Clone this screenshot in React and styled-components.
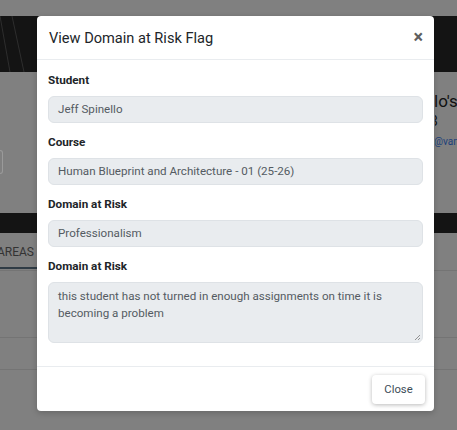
import React from 'react'
import styled, { createGlobalStyle } from 'styled-components'

const GlobalStyle = createGlobalStyle`
  html, body {
    margin: 0;
    padding: 0;
    width: 457px;
    height: 430px;
    overflow: hidden;
    font-family: Roboto, "Liberation Sans", Arial, sans-serif;
  }
`

const Page = styled.div`
  position: relative;
  width: 457px;
  height: 430px;
  overflow: hidden;
  background: #808080;
  display: flex;
  flex-direction: column;
`

const TopGap = styled.div`
  height: 16px;
`

const Hero = styled.div`
  height: 56px;
  background: #141414;
  svg { display: block; }
`

const Profile = styled.div`
  height: 141px;
  display: flex;
  justify-content: space-between;
`

const SideBox = styled.div`
  margin-top: 78px;
  width: 2px;
  height: 22px;
  border: 1px solid #9a9a9a;
  border-left: none;
  border-radius: 0 4px 4px 0;
`

const ProfileText = styled.div`
  width: 22px;
  padding-top: 18px;
  display: flex;
  flex-direction: column;
  overflow: hidden;
  white-space: nowrap;
`

const Name = styled.span`
  font-size: 17px;
  line-height: 22px;
  color: #101010;
  margin-left: -1px;
`

const Year = styled.span`
  font-size: 14px;
  line-height: 18px;
  color: #101010;
  margin-left: -5px;
`

const Mail = styled.span`
  margin-top: 6px;
  font-size: 10px;
  color: #1c3f7a;
  margin-left: -1px;
`

const DarkBar = styled.div`
  height: 20px;
  background: #141414;
`

const Tabs = styled.div`
  height: 37px;
  display: flex;
  justify-content: space-between;
  border-bottom: 1px solid #747474;
`

const Tab = styled.div`
  width: 60px;
  height: 36px;
  box-sizing: border-box;
  padding-top: 12px;
  font-size: 12px;
  color: #333;
  text-indent: -3px;
  overflow: hidden;
  white-space: nowrap;
  border-bottom: 2px solid #2f3b45;
`

const Row = styled.div`
  height: ${p => p.h}px;
  border-bottom: 1px solid #747474;
`

const Overlay = styled.div`
  position: absolute;
  inset: 0;
`

const Modal = styled.div`
  position: absolute;
  left: 37px;
  top: 16px;
  width: 397px;
  height: 395px;
  background: #fff;
  border-radius: 4px;
  display: flex;
  flex-direction: column;
  box-shadow: 0 2px 6px rgba(0, 0, 0, 0.2);
`

const Header = styled.div`
  height: 44px;
  box-sizing: border-box;
  display: flex;
  align-items: center;
  justify-content: space-between;
  padding: 0 11px 0 12px;
  border-bottom: 1px solid #e9ecef;
`

const Title = styled.h5`
  margin: 0;
  font-size: 14.6px;
  font-weight: 400;
  color: #212529;
`

const CloseX = styled.button`
  border: none;
  background: none;
  padding: 0;
  font-size: 18px;
  line-height: 1;
  font-weight: 700;
  color: #5f5f5f;
  font-family: inherit;
  margin-top: -2px;
`

const Body = styled.div`
  flex: 1;
  padding: 12px 11px 0;
  display: flex;
  flex-direction: column;
  gap: 11px;
`

const Group = styled.div`
  display: flex;
  flex-direction: column;
  gap: 8px;
`

const Label = styled.label`
  font-size: 11.7px;
  line-height: 16px;
  font-weight: 700;
  color: #212529;
`

const Field = styled.div`
  height: ${p => (p.area ? 61 : 27)}px;
  box-sizing: border-box;
  position: relative;
  background: #e9ecef;
  border: 1px solid #dee2e6;
  border-radius: 6px;
  padding: ${p => (p.area ? '5px 9px' : '0 9px')};
  display: flex;
  align-items: ${p => (p.area ? 'flex-start' : 'center')};
  font-size: 11.6px;
  line-height: 17px;
  color: #545b62;
`

const Grip = styled.svg`
  position: absolute;
  right: 1px;
  bottom: 1px;
`

const Footer = styled.div`
  height: 45px;
  box-sizing: border-box;
  border-top: 1px solid #e9ecef;
  display: flex;
  align-items: center;
  justify-content: flex-end;
  padding: 0 9px;
`

const Button = styled.button`
  height: 29px;
  width: 53px;
  border: none;
  border-radius: 4px;
  background: #fff;
  box-shadow: 0 1px 4px rgba(0, 0, 0, 0.28);
  font-family: inherit;
  font-size: 11.3px;
  color: #3c4d57;
`

const fields = [
  { label: 'Student', value: 'Jeff Spinello' },
  { label: 'Course', value: 'Human Blueprint and Architecture - 01 (25-26)' },
  { label: 'Domain at Risk', value: 'Professionalism' },
]

export default function App() {
  return (
    <>
      <GlobalStyle />
      <Page>
        <TopGap />
        <Hero>
          <svg width="40" height="56">
            <line x1="0" y1="0" x2="10" y2="56" stroke="#2e2e2e" strokeWidth="1" />
            <line x1="12" y1="0" x2="24" y2="56" stroke="#2e2e2e" strokeWidth="1" />
          </svg>
        </Hero>
        <Profile>
          <SideBox />
          <ProfileText>
            <Name>lo's</Name>
            <Year>3</Year>
            <Mail>@van</Mail>
          </ProfileText>
        </Profile>
        <DarkBar />
        <Tabs>
          <Tab>AREAS OF</Tab>
        </Tabs>
        <Row h={66} />
        <Row h={31} />
        <Overlay>
          <Modal role="dialog">
            <Header>
              <Title>View Domain at Risk Flag</Title>
              <CloseX aria-label="Close">×</CloseX>
            </Header>
            <Body>
              {fields.map(f => (
                <Group key={f.label + f.value}>
                  <Label>{f.label}</Label>
                  <Field>{f.value}</Field>
                </Group>
              ))}
              <Group>
                <Label>Domain at Risk</Label>
                <Field area>
                  this student has not turned in enough assignments on time it is becoming a problem
                  <Grip width="7" height="7" viewBox="0 0 7 7">
                    <line x1="1" y1="6" x2="6" y2="1" stroke="#888" strokeWidth="0.9" />
                    <line x1="4" y1="6" x2="6" y2="4" stroke="#888" strokeWidth="0.9" />
                  </Grip>
                </Field>
              </Group>
            </Body>
            <Footer>
              <Button>Close</Button>
            </Footer>
          </Modal>
        </Overlay>
      </Page>
    </>
  )
}
